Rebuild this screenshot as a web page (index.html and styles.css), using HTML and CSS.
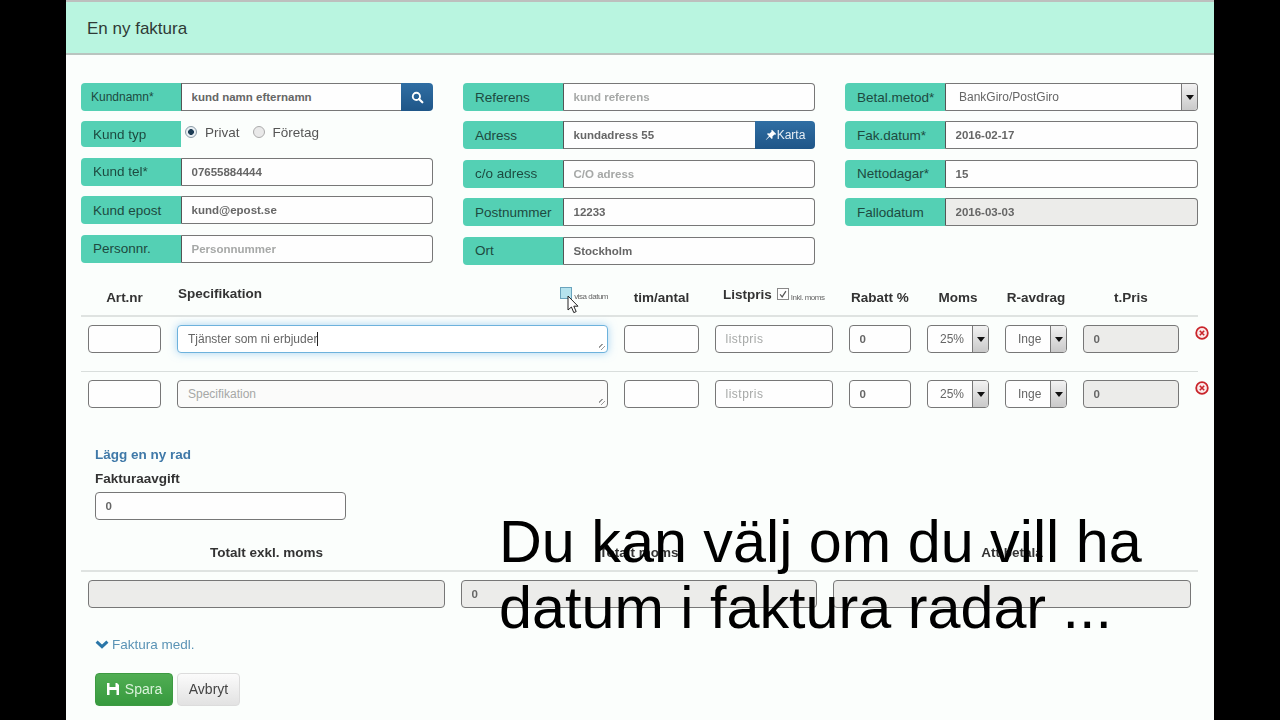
FILE: index.html
```html
<!DOCTYPE html>
<html lang="sv">
<head>
<meta charset="utf-8">
<title>En ny faktura</title>
<link rel="stylesheet" href="styles.css">
</head>
<body>
<main class="page">
  <header class="heading">En ny faktura</header>
  <form class="body">
    <div class="customer">
      <div class="col">
        <div class="group"><label class="tag tag-small">Kundnamn*</label><input class="field strong" value="kund namn efternamn"><button type="button" class="addon addon-search"><svg viewBox="0 0 14 14" width="13" height="13"><circle cx="5.8" cy="5.8" r="3.9" fill="none" stroke="#fff" stroke-width="2"/><path d="M8.6 8.6l3.6 3.6" stroke="#fff" stroke-width="2.4" stroke-linecap="round"/></svg></button></div>
        <div class="group group-short"><label class="tag">Kund typ</label>
          <div class="radios"><span class="radio radio-on"></span><span>Privat</span><span class="radio radio-off"></span><span>Företag</span></div>
        </div>
        <div class="group"><label class="tag">Kund tel*</label><input class="field strong" value="07655884444"></div>
        <div class="group"><label class="tag">Kund epost</label><input class="field strong" value="kund@epost.se"></div>
        <div class="group"><label class="tag">Personnr.</label><input class="field strong" placeholder="Personnummer"></div>
      </div>
      <div class="col">
        <div class="group"><label class="tag">Referens</label><input class="field strong" placeholder="kund referens"></div>
        <div class="group"><label class="tag">Adress</label><input class="field strong" value="kundadress 55"><button type="button" class="addon addon-map"><svg viewBox="0 0 12 12" width="12" height="12"><path d="M7 .8l4.2 4.2-1 .7-.8-.3-2 2 .2 1.8-.8.8-2.2-2.2L1 11l-.2-.2 3.2-3.7-2-2.1.8-.8 1.8.2 2-2-.3-.8z" fill="#fff"/></svg>Karta</button></div>
        <div class="group"><label class="tag">c/o adress</label><input class="field strong" placeholder="C/O adress"></div>
        <div class="group"><label class="tag">Postnummer</label><input class="field strong" value="12233"></div>
        <div class="group"><label class="tag">Ort</label><input class="field strong" value="Stockholm"></div>
      </div>
      <div class="col">
        <div class="group"><label class="tag">Betal.metod*</label><div class="select select-wide"><span class="select-text">BankGiro/PostGiro</span><span class="select-btn"></span></div></div>
        <div class="group"><label class="tag">Fak.datum*</label><input class="field strong" value="2016-02-17"></div>
        <div class="group"><label class="tag">Nettodagar*</label><input class="field strong" value="15"></div>
        <div class="group"><label class="tag">Fallodatum</label><input class="field strong field-off" value="2016-03-03" readonly></div>
      </div>
    </div>

    <div class="lines">
      <div class="line-grid line-head">
        <div class="th">Art.nr</div>
        <div class="th th-spec"><span class="spec-title">Specifikation</span><span class="check-wrap"><span class="check check-hover"></span><small class="tiny">visa datum</small></span></div>
        <div class="th">tim/antal</div>
        <div class="th th-list"><span class="list-title">Listpris</span><span class="check"><svg viewBox="0 0 12 12" width="10" height="10"><path d="M2.5 6.5l2.5 3 4.5-7" fill="none" stroke="#555" stroke-width="1.4"/></svg></span><small class="tiny tiny-inkl">Inkl. moms</small></div>
        <div class="th">Rabatt %</div>
        <div class="th">Moms</div>
        <div class="th">R-avdrag</div>
        <div class="th">t.Pris</div>
      </div>
      <div class="line-grid line-row line-rule">
        <input class="field">
        <div class="spec-box spec-focus"><span class="spec-text">Tjänster som ni erbjuder</span><span class="caret"></span><span class="grip"></span></div>
        <input class="field">
        <input class="field field-price" placeholder="listpris">
        <input class="field strong" value="0">
        <div class="select"><span class="select-text select-narrow">25%</span><span class="select-btn"></span></div>
        <div class="select"><span class="select-text select-narrow">Inge</span><span class="select-btn"></span></div>
        <input class="field strong field-off" value="0" readonly>
        <svg class="del" viewBox="0 0 14 14" width="14" height="14"><circle cx="7" cy="7" r="5.8" fill="#fbeaea" stroke="#c9252b" stroke-width="1.8"/><path d="M4.8 4.8l4.4 4.4M9.2 4.8l-4.4 4.4" stroke="#c9252b" stroke-width="1.6"/></svg>
      </div>
      <div class="line-grid line-row">
        <input class="field">
        <div class="spec-box"><span class="spec-text spec-ph">Specifikation</span><span class="grip"></span></div>
        <input class="field">
        <input class="field field-price" placeholder="listpris">
        <input class="field strong" value="0">
        <div class="select"><span class="select-text select-narrow">25%</span><span class="select-btn"></span></div>
        <div class="select"><span class="select-text select-narrow">Inge</span><span class="select-btn"></span></div>
        <input class="field strong field-off" value="0" readonly>
        <svg class="del" viewBox="0 0 14 14" width="14" height="14"><circle cx="7" cy="7" r="5.8" fill="#fbeaea" stroke="#c9252b" stroke-width="1.8"/><path d="M4.8 4.8l4.4 4.4M9.2 4.8l-4.4 4.4" stroke="#c9252b" stroke-width="1.6"/></svg>
      </div>
    </div>

    <div class="fee">
      <a class="add-row">Lägg en ny rad</a>
      <label class="fee-label">Fakturaavgift</label>
      <input class="field strong fee-input" value="0">
    </div>

    <div class="totals">
      <div class="totals-grid totals-head">
        <div class="th">Totalt exkl. moms</div>
        <div class="th">Totalt moms</div>
        <div class="th">Att betala</div>
      </div>
      <div class="totals-grid totals-row">
        <input class="field field-off" readonly>
        <input class="field strong field-off" value="0" readonly>
        <input class="field field-off" readonly>
      </div>
    </div>

    <a class="members"><svg viewBox="0 0 14 10" width="14" height="10"><path d="M1.6 1.6L7 6.6l5.4-5" fill="none" stroke="#2a76a8" stroke-width="3"/></svg>Faktura medl.</a>

    <div class="actions">
      <button type="button" class="btn btn-save"><svg viewBox="0 0 14 14" width="14" height="14"><path d="M1 1h10l2 2v10H1zM3.5 1v4h6V1zM3.5 8v5h7V8z" fill="#fff" fill-rule="evenodd"/></svg>Spara</button>
      <button type="button" class="btn btn-cancel">Avbryt</button>
    </div>
  </form>

  <svg class="cursor" viewBox="0 0 13 19" width="13" height="19"><path d="M1 1v14l3.4-3 2.4 5.6 2.4-1-2.4-5.4H11z" fill="#fff" stroke="#222" stroke-width="1"/></svg>
  <p class="caption">Du kan välj om du vill ha<br>datum i faktura radar ...</p>
</main>
</body>
</html>
```

FILE: styles.css
```css
* { box-sizing: border-box; }
html, body { margin: 0; height: 100%; background: #000; overflow: hidden; }
body { font-family: "Liberation Sans", Arial, sans-serif; color: #333; }

.page {
  position: relative;
  width: 1148px;
  height: 720px;
  margin: 0 auto;
  background: #fbfefc;
  border-top: 2px solid #bdbfbe;
}
.heading {
  height: 53px;
  padding: 2px 21px 0;
  display: flex;
  align-items: center;
  background: #b9f5e0;
  border-bottom: 2px solid #b9c4bf;
  font-size: 17px;
  color: #2f3a36;
}
.body { padding: 28px 16px 0 15px; filter: blur(.3px); }

/* customer block */
.customer { display: grid; grid-template-columns: 352px 352px 353px; column-gap: 30px; }
.col { display: flex; flex-direction: column; gap: 10.4px; }
.group { display: flex; height: 28px; }
.group-short { height: 26px; }
.tag {
  flex: none;
  width: 100px;
  padding-left: 12px;
  display: flex;
  align-items: center;
  background: #54d0b4;
  border-radius: 4px 0 0 4px;
  font-size: 13.5px;
  color: #1d4a40;
}
.tag-small { font-size: 12px; padding-left: 10px; }
.field {
  display: block;
  width: 100%;
  min-width: 0;
  height: 28px;
  padding: 0 9.5px;
  border: 1px solid #777;
  border-radius: 4px;
  background: #fefefe;
  font: 12px "Liberation Sans", Arial, sans-serif;
  color: #666;
  outline: none;
}
.group .field { flex: 1; border-radius: 0 4px 4px 0; border-left-color: #555; }
.group .field:not(:last-child) { border-radius: 0; border-right: 0; }
.strong { font-size: 11.5px; font-weight: 700; }
.field::placeholder { color: #a6a8a7; opacity: 1; }
.field-price { letter-spacing: .5px; }
.field-off { background: #ececea; }
.addon {
  flex: none;
  display: flex;
  align-items: center;
  justify-content: center;
  height: 28px;
  padding: 0;
  border: 0;
  border-radius: 0 4px 4px 0;
  background: linear-gradient(#2f6ea3, #1f5688);
  color: #fff;
  font: 12px "Liberation Sans", Arial, sans-serif;
}
.addon-search { width: 32px; }
.addon-map { width: 60px; color: #e6eef5; }
.radios { display: flex; align-items: center; padding: 0 0 4px 4px; font-size: 13.5px; color: #555; }
.radio { width: 12px; height: 12px; margin-right: 8px; border-radius: 50%; border: 1px solid #aaa; background: #e9e9e9; }
.radio-on { background: radial-gradient(circle, #1d3d55 0 2.6px, #e8eef2 3.2px); border-color: #8a9aa6; }
.radio-off { margin-left: 13px; }

.select {
  flex: 1;
  display: flex;
  height: 28px;
  min-width: 0;
  border: 1px solid #777;
  border-radius: 4px;
  background: #fefefe;
  overflow: hidden;
  font-size: 12px;
  color: #666;
}
.select-wide { border-radius: 0 4px 4px 0; border-left-color: #555; }
.select-text { flex: 1; display: flex; align-items: center; padding-left: 13px; }
.select-narrow { padding-left: 12px; }
.select-btn {
  flex: none;
  width: 16px;
  position: relative;
  border-left: 1px solid #777;
  background: linear-gradient(#f2f2f2, #c9c9c9);
}
.select-btn::after {
  content: "";
  position: absolute;
  left: 3.5px;
  top: 11px;
  border: 4px solid transparent;
  border-top: 5px solid #111;
  border-bottom: 0;
}

/* invoice lines */
.lines { margin-top: 16px; }
.line-grid {
  display: grid;
  grid-template-columns: 73px 431px 75px 118px 62px 62px 62px 96px 14px;
  column-gap: 16px;
  padding-left: 7px;
}
.line-head { height: 36px; border-bottom: 2px solid #dfe3e1; }
.th {
  display: flex;
  justify-content: center;
  padding-top: 9px;
  font-size: 13.5px;
  font-weight: 700;
  line-height: 16px;
  color: #333;
  white-space: nowrap;
}
.th-spec { justify-content: space-between; padding-top: 5px; padding-left: 1px; }
.check-wrap { display: flex; }
.check {
  flex: none;
  display: flex;
  align-items: center;
  justify-content: center;
  width: 12px;
  height: 12px;
  margin-top: 1px;
  border: 1px solid #888;
  background: #fff;
}
.check-hover { background: #b5e3ee; border-color: #6aa4bd; }
.tiny { font-size: 8px; font-weight: 400; color: #666; letter-spacing: -.5px; margin: 3px 0 0 2px; }
.th-list { justify-content: flex-start; padding: 6px 0 0 8px; overflow: visible; }
.list-title { margin-right: 5px; }
.tiny-inkl { margin-top: 3px; }

.line-row { padding-top: 8px; padding-bottom: 18px; }
.line-rule { border-bottom: 1px solid #d9dedc; }
.spec-box {
  position: relative;
  display: flex;
  align-items: center;
  height: 28px;
  padding: 0 10px;
  border: 1px solid #777;
  border-radius: 4px;
  background: #fbfbfa;
  font-size: 12px;
  color: #666;
}
.spec-focus {
  border-color: #6db2dc;
  background: #fff;
  box-shadow: 0 0 8px rgba(102, 175, 233, .55);
}
.spec-ph { color: #a6a8a7; }
.caret { width: 1px; height: 14px; background: #222; }
.grip {
  position: absolute;
  right: 2px;
  bottom: 2px;
  width: 6px;
  height: 6px;
  background: repeating-linear-gradient(135deg, transparent 0 2px, #999 2px 3px);
}
.del { margin-top: 1px; }

/* fee */
.fee { padding-left: 14px; margin-top: 21px; }
.add-row { display: block; font-size: 13.5px; line-height: 16px; font-weight: 700; color: #3f79a8; }
.fee-label { display: block; margin: 8px 0 5px; font-size: 13.5px; line-height: 16px; font-weight: 700; color: #333; }
.fee-input { width: 251px; }

/* totals */
.totals { margin-top: 24px; }
.totals-grid { display: grid; grid-template-columns: 357px 356px 358px; column-gap: 16px; padding-left: 7px; }
.totals-head { height: 28px; border-bottom: 2px solid #dfe3e1; }
.totals-head .th { padding-top: 1px; }
.totals-row { padding-top: 8px; }

.members {
  display: flex;
  align-items: center;
  gap: 3px;
  margin: 29px 0 0 14px;
  font-size: 13.5px;
  line-height: 16px;
  color: #5a93b5;
}
.actions { display: flex; gap: 4px; margin: 20px 0 0 14px; }
.btn {
  display: flex;
  align-items: center;
  justify-content: center;
  height: 33px;
  padding: 0;
  border-radius: 4px;
  font: 14px "Liberation Sans", Arial, sans-serif;
}
.btn-save {
  width: 78px;
  gap: 5px;
  border: 1px solid #3d9a42;
  background: linear-gradient(#50ad53, #379a3e);
  color: #d9f2da;
}
.btn-cancel {
  width: 63px;
  border: 1px solid #dcdcdc;
  background: linear-gradient(#fbfbfb, #e2e2e2);
  color: #444;
}

/* overlays: pointer and video caption */
.cursor { position: absolute; left: 501px; top: 293px; }
.caption {
  position: absolute;
  left: 433px;
  top: 507px;
  margin: 0;
  font-size: 59.3px;
  line-height: 66px;
  color: #000;
  white-space: nowrap;
}
```
